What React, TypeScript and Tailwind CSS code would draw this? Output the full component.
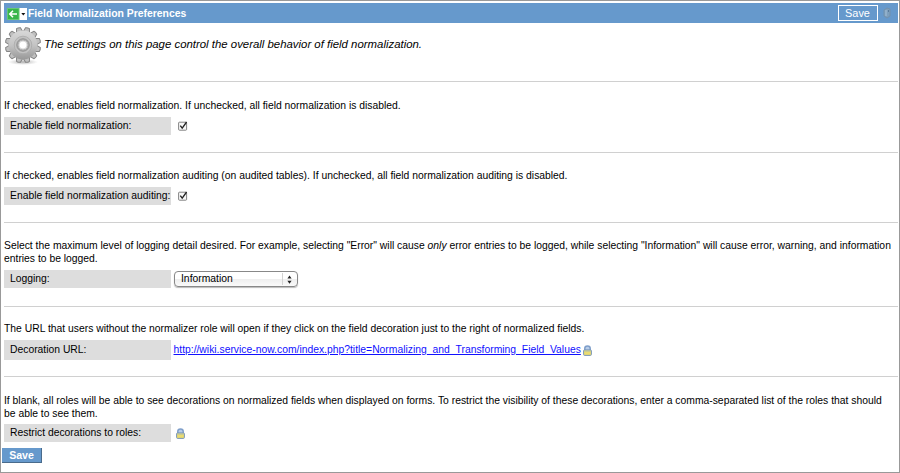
import { ReactNode } from "react";

function Gear() {
  return (
    <svg width="38" height="40" viewBox="0 0 38 40">
      <defs>
        <linearGradient id="metal" gradientUnits="userSpaceOnUse" x1="0" y1="0" x2="0" y2="38">
          <stop offset="0" stopColor="#dedede" />
          <stop offset="0.5" stopColor="#c4c4c4" />
          <stop offset="1" stopColor="#8a8a8a" />
        </linearGradient>
        <radialGradient id="shade">
          <stop offset="0" stopColor="#777" stopOpacity="0.6" />
          <stop offset="1" stopColor="#999" stopOpacity="0" />
        </radialGradient>
      </defs>
      <ellipse cx="19" cy="36" rx="15" ry="3" fill="url(#shade)" />
      <g stroke="#858585" strokeWidth="1">
        {[0, 30, 60, 90, 120, 150].map((a) => (
          <path
            key={a}
            d="M15.2 8 L17 1.6 Q19 0.8 21 1.6 L22.8 8 V30 L21 36.4 Q19 37.2 17 36.4 L15.2 30 Z"
            transform={`rotate(${a + 15} 19 19)`}
            fill="#c0c0c0"
          />
        ))}
      </g>
      <circle cx="19" cy="19" r="14.4" fill="url(#metal)" />
      <circle cx="19" cy="19" r="8.8" fill="#c2c2c2" stroke="#aaa" strokeWidth="0.8" />
      <circle cx="19" cy="19" r="6.2" fill="#b2b2b2" stroke="#8f8f8f" strokeWidth="1" />
      <circle cx="19" cy="19" r="4" fill="#fff" stroke="#ddd" strokeWidth="1" />
    </svg>
  );
}

function Lock() {
  return (
    <svg width="9" height="11" viewBox="0 0 9 11" className="shrink-0">
      <path d="M1.8 6V3.2Q1.8 0.9 4.5 0.9T7.2 3.2V6" fill="#b9cde8" stroke="#7f9fca" strokeWidth="1.5" />
      <rect x="0.6" y="4.9" width="7.8" height="5.5" rx="1" fill="#eadc70" stroke="#7896bb" />
      <path d="M1.5 6h6" stroke="#a9b9b4" strokeWidth="1" />
    </svg>
  );
}

function Checkbox() {
  return (
    <svg width="10" height="11" viewBox="0 0 10 11">
      <rect x="0.6" y="1.2" width="8" height="8" rx="0.8" fill="#f7f7f7" stroke="#777" strokeWidth="0.9" />
      <path d="M2.3 4.6L4.2 7.2L8.6 1" fill="none" stroke="#222" strokeWidth="1.3" />
    </svg>
  );
}

function Row({ label, height = "h-[18px]", children }: { label: string; height?: string; children: ReactNode }) {
  return (
    <div className={`flex items-center ${height}`}>
      <div className="flex h-full w-[167px] shrink-0 items-center bg-[#dddddd] pl-[6px] whitespace-nowrap">{label}</div>
      {children}
    </div>
  );
}

export default function App() {
  return (
    <div className="flex h-[473px] w-[900px] flex-col overflow-hidden border border-[#999999] bg-white pt-[2px] pr-px pl-[3px] font-['Liberation_Sans',Arial,sans-serif] text-[10.35px] leading-[12.5px] text-black">
      <header className="flex h-5 shrink-0 items-center bg-[#6699cc] pl-[3px] text-white">
        <svg width="20" height="12" viewBox="0 0 20 12" className="mt-px shrink-0">
          <rect width="20" height="12" fill="#fff" />
          <rect x="0.5" y="0.5" width="11.5" height="11" fill="#38b54a" stroke="#66c874" />
          <path d="M10 6H3M6 2.8L2.8 6L6 9.2" fill="none" stroke="#fff" strokeWidth="1.6" />
          <path d="M14.3 5h4l-2 2.4z" fill="#111" />
        </svg>
        <h1 className="mt-px ml-px text-[10.4px] leading-[13px] font-bold whitespace-nowrap">Field Normalization Preferences</h1>
        <button className="ml-auto h-4 w-10 border border-white pr-px text-[10.9px] leading-[14px]">Save</button>
        <svg width="8" height="12" viewBox="0 0 8 12" className="mr-[7px] ml-[5px] shrink-0">
          <path d="M1 3L4 1L7 2V9L4 11L1 9Z" fill="#7d9fbd" stroke="#7391ad" />
          <path d="M3 3V9" stroke="#a5c0d8" />
          <path d="M5.5 3V5" stroke="#58799a" />
        </svg>
      </header>

      <section className="flex h-[58px] shrink-0 pt-[3px]">
        <Gear />
        <p className="ml-[2px] pt-[11px] text-[11.4px] leading-[14px] whitespace-nowrap italic">
          The settings on this page control the overall behavior of field normalization.
        </p>
      </section>

      <section className="h-[71px] shrink-0 border-t border-[#d0d0d0] pt-[18px]">
        <p className="h-[17px] whitespace-nowrap">If checked, enables field normalization. If unchecked, all field normalization is disabled.</p>
        <Row label="Enable field normalization:">
          <div className="ml-[7px]"><Checkbox /></div>
        </Row>
      </section>

      <section className="h-[70px] shrink-0 border-t border-[#d0d0d0] pt-[17px]">
        <p className="h-[17px] whitespace-nowrap">If checked, enables field normalization auditing (on audited tables). If unchecked, all field normalization auditing is disabled.</p>
        <Row label="Enable field normalization auditing:">
          <div className="ml-[7px]"><Checkbox /></div>
        </Row>
      </section>

      <section className="h-[84px] shrink-0 border-t border-[#d0d0d0] pt-[17px]">
        <p className="h-[30px] whitespace-nowrap">
          Select the maximum level of logging detail desired. For example, selecting "Error" will cause <i>only</i> error entries to be logged, while selecting "Information" will cause error, warning, and information
          <br />
          entries to be logged.
        </p>
        <Row label="Logging:">
          <div className="ml-[3px] flex h-4 w-[124px] items-center rounded-[4px] border border-[#888] bg-linear-to-b from-white from-50% via-[#eeeeee] via-50% to-[#fafafa] pr-[5px] pl-[6px] shadow-[0_1px_1px_#bbb]">
            <span className="grow">Information</span>
            <span className="mr-[4px] h-[12px] border-l border-[#d2d2d2]" />
            <svg width="5" height="9" viewBox="0 0 5 9">
              <path d="M0.4 3.5L2.5 0.5L4.6 3.5ZM0.4 5.7L2.5 8.7L4.6 5.7Z" fill="#222" />
            </svg>
          </div>
        </Row>
      </section>

      <section className="h-[70px] shrink-0 border-t border-[#d0d0d0] pt-4">
        <p className="h-[17px] whitespace-nowrap">The URL that users without the normalizer role will open if they click on the field decoration just to the right of normalized fields.</p>
        <Row label="Decoration URL:" height="h-5">
          <a href="#" className="mr-[2px] ml-[2.5px] whitespace-nowrap text-[#1111ff] underline">http://wiki.service-now.com/index.php?title=Normalizing_and_Transforming_Field_Values</a>
          <Lock />
        </Row>
      </section>

      <section className="h-[72px] shrink-0 border-t border-[#d0d0d0] pt-[18px]">
        <p className="h-[29px] whitespace-nowrap">
          If blank, all roles will be able to see decorations on normalized fields when displayed on forms. To restrict the visibility of these decorations, enter a comma-separated list of the roles that should
          <br />
          be able to see them.
        </p>
        <Row label="Restrict decorations to roles:">
          <div className="ml-[5px]"><Lock /></div>
        </Row>
      </section>

      <button className="-ml-[2px] h-[15px] w-10 shrink-0 border-r border-b border-[#496b8c] bg-[#6699cc] text-[10.6px] leading-[14px] font-bold text-white">Save</button>
    </div>
  );
}
